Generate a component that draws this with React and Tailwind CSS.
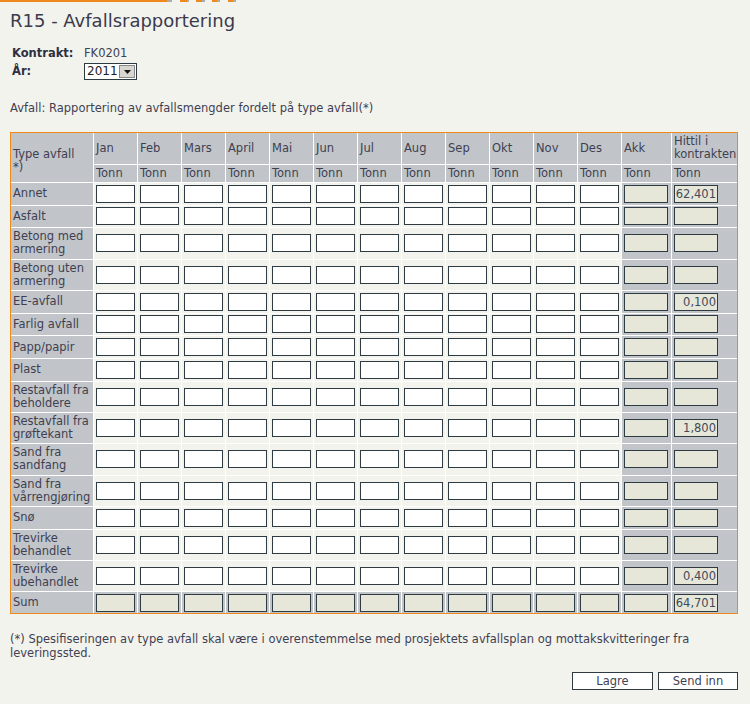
import React from "react";

const months = ["Jan","Feb","Mars","April","Mai","Jun","Jul","Aug","Sep","Okt","Nov","Des"];

const rows = [
  { l: ["Annet"], h: "62,401" },
  { l: ["Asfalt"] },
  { l: ["Betong med", "armering"] },
  { l: ["Betong uten", "armering"] },
  { l: ["EE-avfall"], h: "0,100" },
  { l: ["Farlig avfall"] },
  { l: ["Papp/papir"] },
  { l: ["Plast"] },
  { l: ["Restavfall fra", "beholdere"] },
  { l: ["Restavfall fra", "grøftekant"], h: "1,800" },
  { l: ["Sand fra", "sandfang"] },
  { l: ["Sand fra", "vårrengjøring"] },
  { l: ["Snø"] },
  { l: ["Trevirke", "behandlet"] },
  { l: ["Trevirke", "ubehandlet"], h: "0,400" },
];

function Lines({ lines }) {
  return (
    <span>
      {lines.map((t, i) => (
        <React.Fragment key={i}>
          {i > 0 && <br />}
          {t}
        </React.Fragment>
      ))}
    </span>
  );
}

function WhiteInput() {
  return <div className="h-[18px] w-full border border-[#2f3b42] bg-white" />;
}

function BeigeInput({ value }) {
  return (
    <div className="h-[18px] w-[44px] border border-[#2f3b42] bg-[#e6e7d9] text-right pr-[1px] leading-[16px] text-[#3f4a5a]">
      {value || ""}
    </div>
  );
}

function TopBar() {
  const segs = [
    [0, 167, "o"], [167, 172, "g"], [180, 187, "o"], [187, 189, "g"],
    [196, 202, "o"], [202, 205, "g"], [212, 217, "o"], [217, 220, "g"],
    [228, 233, "o"], [233, 236, "g"],
  ];
  return (
    <div className="relative h-[2px] w-full">
      {segs.map(([a, b, c], i) => (
        <div
          key={i}
          className={c === "o" ? "absolute top-0 h-[2px] bg-[#ee8a1b]" : "absolute top-0 h-[2px] bg-[#a9adb2]"}
          style={{ left: a, width: b - a }}
        />
      ))}
    </div>
  );
}

export default function App() {
  const bodyBg = "bg-[#f3f3ee]";
  return (
    <div
      className="min-h-[704px] w-[750px] bg-[#f3f3ee] text-[11.5px] text-[#3f3f52]"
      style={{ fontFamily: "'DejaVu Sans', Verdana, sans-serif" }}
    >
      <TopBar />
      <div className="px-[10px]">
        <h1 className="mt-[8px] text-[18px] leading-[22px] text-[#3a3a4c]">R15 - Avfallsrapportering</h1>

        <div className="mt-[13px] pl-[2px]">
          <div className="flex items-center h-[17px]">
            <div className="w-[72px] font-bold text-[#2f2f3f]">Kontrakt:</div>
            <div>FK0201</div>
          </div>
          <div className="flex items-start h-[20px]">
            <div className="w-[72px] font-bold text-[#2f2f3f] pt-[1px]">År:</div>
            <div className="mt-[1px] flex h-[17px] w-[53px] items-center border border-[#2f3b42] bg-white">
              <div className="flex-1 pl-[2px] text-[12px] leading-[15px] text-[#222]">2011</div>
              <div className="mr-[1px] flex h-[13px] w-[16px] items-center justify-center border border-[#888] bg-[#d8d6d0]">
                <svg width="7" height="4" viewBox="0 0 7 4"><path d="M0 0H7L3.5 4Z" fill="#111" /></svg>
              </div>
            </div>
          </div>
        </div>

        <div className="mt-[19px] leading-[14px]">Avfall: Rapportering av avfallsmengder fordelt på type avfall(*)</div>

        <div className="mt-[17px] w-[728px] border border-[#ee8a1b]">
          <div className="grid grid-cols-[82px_repeat(12,44px)_50px_66px] leading-[13px]">
            {/* header row 1 */}
            <div className="row-span-2 flex items-center bg-[#c1c5c9] px-[2px] pt-[6px]">
              <Lines lines={["Type avfall", "*)"]} />
            </div>
            {months.map((m) => (
              <div key={m} className="flex h-[31px] items-center border-l border-white bg-[#c1c5c9] px-[2px]">{m}</div>
            ))}
            <div className="flex h-[31px] items-center border-l border-white bg-[#c1c5c9] px-[2px]">Akk</div>
            <div className="flex h-[31px] items-center border-l border-white bg-[#c1c5c9] px-[2px] pb-[1px]">
              <Lines lines={["Hittil i", "kontrakten"]} />
            </div>
            {/* header row 2 */}
            {months.map((m) => (
              <div key={m + "t"} className="flex h-[18px] items-center border-l border-t border-white bg-[#c1c5c9] px-[2px]">Tonn</div>
            ))}
            <div className="flex h-[18px] items-center border-l border-t border-white bg-[#c1c5c9] px-[2px]">Tonn</div>
            <div className="flex h-[18px] items-center border-l border-t border-white bg-[#c1c5c9] px-[2px]">Tonn</div>

            {rows.map((r, ri) => (
              <React.Fragment key={ri}>
                <div className={r.l.length > 1 ? "flex h-[31.33px] items-center border-t border-white bg-[#c1c5c9] px-[2px]" : "flex h-[22.67px] items-center border-t border-white bg-[#c1c5c9] px-[2px]"}>
                  <Lines lines={r.l} />
                </div>
                {months.map((m) => (
                  <div key={m} className={"flex items-center border-l border-t border-white px-[2px] " + bodyBg}>
                    <WhiteInput />
                  </div>
                ))}
                <div className="flex items-center border-l border-t border-white bg-[#c1c5c9] px-[2px]">
                  <BeigeInput />
                </div>
                <div className="flex items-center border-l border-t border-white bg-[#c1c5c9] px-[2px]">
                  <BeigeInput value={r.h} />
                </div>
              </React.Fragment>
            ))}

            {/* Sum */}
            <div className="flex h-[22px] items-center border-t border-white bg-[#c1c5c9] px-[2px]">Sum</div>
            {months.map((m) => (
              <div key={m + "s"} className="flex items-center border-l border-t border-white bg-[#c1c5c9] px-[2px]">
                <div className="h-[18px] w-full border border-[#2f3b42] bg-[#e6e7d9]" />
              </div>
            ))}
            <div className="flex items-center border-l border-t border-white bg-[#c1c5c9] px-[2px]">
              <BeigeInput />
            </div>
            <div className="flex items-center border-l border-t border-white bg-[#c1c5c9] px-[2px]">
              <BeigeInput value="64,701" />
            </div>
          </div>
        </div>

        <div className="mt-[18px] leading-[14px]">
          (*) Spesifiseringen av type avfall skal være i overenstemmelse med prosjektets avfallsplan og mottakskvitteringer fra
          <br />
          leveringssted.
        </div>

        <div className="mt-[12px] flex justify-end gap-[5px] pr-[2px]">
          <button className="h-[18px] w-[81px] border border-[#2f3b42] bg-white text-[11.5px] leading-[16px] text-[#3f3f52]">Lagre</button>
          <button className="h-[18px] w-[80px] border border-[#2f3b42] bg-white text-[11.5px] leading-[16px] text-[#3f3f52]">Send inn</button>
        </div>
      </div>
    </div>
  );
}
